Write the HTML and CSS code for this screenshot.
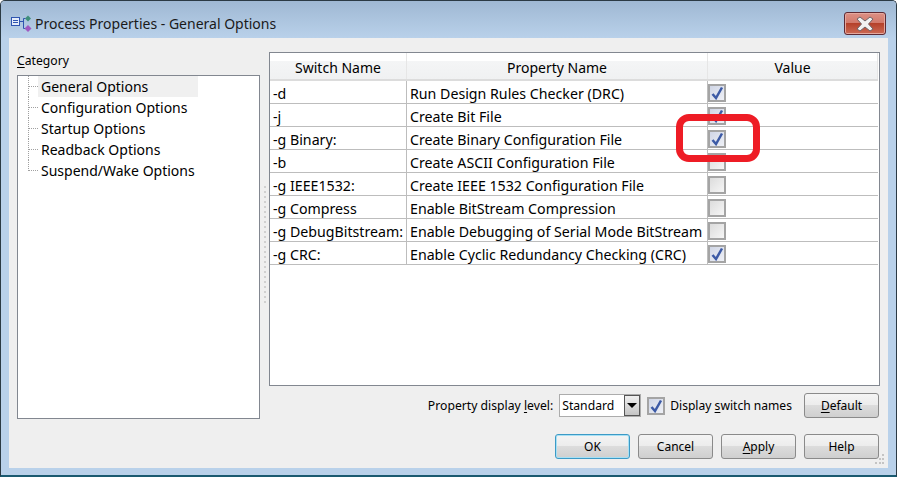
FILE: index.html
```html
<!DOCTYPE html>
<html lang="en">
<head>
<meta charset="utf-8">
<title>Process Properties - General Options</title>
<link rel="stylesheet" href="styles.css">
</head>
<body>
<div class="window">
  <header class="titlebar">
    <svg class="app-icon" width="21" height="17" viewBox="0 0 21 17">
      <rect x="0.5" y="2.5" width="8" height="8" fill="#e4ecfa" stroke="#2f55b0"/>
      <path d="M2 5.5h5M2 7.5h5" stroke="#2f55b0"/>
      <path d="M9 6.5h3.5M12.5 3.5v10M12.5 3.5h2M12.5 13.5h2" stroke="#2f55b0" fill="none"/>
      <path d="M17 0.5l3 3l-3 3l-3-3z" fill="#3f8f7a"/>
      <path d="M17 10l3.500 3.500l-3.500 3.500l-3.500-3.500z" fill="#a05ac0"/>
    </svg>
    <h1 class="title">Process Properties - General Options</h1>
    <button class="close" aria-label="Close">
      <svg width="18" height="16" viewBox="0 0 18 16">
        <path d="M1 3L4 1L9 5L14 1L17 3L12.500 8L17 13L14 15L9 11L4 15L1 13L5.500 8Z" fill="#f2f2f2" stroke="#6e6468"/>
      </svg>
    </button>
  </header>
  <main class="content">
    <div class="panes">
      <section class="left">
        <label class="cat-label"><u>C</u>ategory</label>
        <ul class="tree">
          <li class="node selected"><span>General Options</span></li>
          <li class="node"><span>Configuration Options</span></li>
          <li class="node"><span>Startup Options</span></li>
          <li class="node"><span>Readback Options</span></li>
          <li class="node last"><span>Suspend/Wake Options</span></li>
        </ul>
      </section>
      <div class="splitter"><div class="grip"></div></div>
      <section class="right">
        <div class="gridbox">
          <div class="row head">
            <div class="c1">Switch Name</div>
            <div class="c2">Property Name</div>
            <div class="c3">Value</div>
          </div>
          <div class="row"><div class="c1">-d</div><div class="c2">Run Design Rules Checker (DRC)</div><div class="c3"><span class="cb on"><svg width="14" height="14" viewBox="0 0 14 14"><path d="M2.500 8L6 12L12 1.500" class="tick"/></svg></span></div></div>
          <div class="row"><div class="c1">-j</div><div class="c2">Create Bit File</div><div class="c3"><span class="cb on"><svg width="14" height="14" viewBox="0 0 14 14"><path d="M2.500 8L6 12L12 1.500" class="tick"/></svg></span></div></div>
          <div class="row"><div class="c1">-g Binary:</div><div class="c2">Create Binary Configuration File</div><div class="c3"><span class="cb on"><svg width="14" height="14" viewBox="0 0 14 14"><path d="M2.500 8L6 12L12 1.500" class="tick"/></svg></span></div></div>
          <div class="row"><div class="c1">-b</div><div class="c2">Create ASCII Configuration File</div><div class="c3"><span class="cb"></span></div></div>
          <div class="row"><div class="c1">-g IEEE1532:</div><div class="c2">Create IEEE 1532 Configuration File</div><div class="c3"><span class="cb"></span></div></div>
          <div class="row"><div class="c1">-g Compress</div><div class="c2">Enable BitStream Compression</div><div class="c3"><span class="cb"></span></div></div>
          <div class="row"><div class="c1">-g DebugBitstream:</div><div class="c2">Enable Debugging of Serial Mode BitStream</div><div class="c3"><span class="cb"></span></div></div>
          <div class="row"><div class="c1">-g CRC:</div><div class="c2">Enable Cyclic Redundancy Checking (CRC)</div><div class="c3"><span class="cb on"><svg width="14" height="14" viewBox="0 0 14 14"><path d="M2.500 8L6 12L12 1.500" class="tick"/></svg></span></div></div>
        </div>
        <div class="controls">
          <span class="lvl-label">Property display <u>l</u>evel:</span>
          <div class="combo"><span class="combo-text">Standard</span><span class="combo-btn"><i class="arrow"></i></span></div>
          <span class="cb on small"><svg width="14" height="14" viewBox="0 0 14 14"><path d="M2.500 8L6 12L12 1.500" class="tick"/></svg></span>
          <span class="sw-label">Display <u>s</u>witch names</span>
          <button class="btn"><u>D</u>efault</button>
        </div>
      </section>
    </div>
    <footer class="actions">
      <button class="btn primary">OK</button>
      <button class="btn">Cancel</button>
      <button class="btn"><u>A</u>pply</button>
      <button class="btn">Help</button>
    </footer>
    <svg class="resize" width="12" height="12" viewBox="0 0 12 12">
      <path d="M8 0h2v2H8zM5 4h2v2H5zM8 4h2v2H8zM1 8h2v2H1zM5 8h2v2H5zM8 8h2v2H8z" fill="#c4c4c4"/>
    </svg>
  </main>
  <div class="annotation"></div>
</div>
</body>
</html>
```
FILE: styles.css
```css
* { box-sizing: border-box; }
html, body { margin: 0; height: 100%; background: #fff; }
body { overflow: hidden; font-family: "Noto Sans", "Open Sans", sans-serif; font-size: 14px; color: #000; }
u { text-decoration: underline; text-underline-offset: 2px; }

.window {
  position: relative;
  width: 897px;
  height: 477px;
  display: flex;
  flex-direction: column;
  border: 1px solid #2b3a44;
  border-bottom: 2px solid #1a5a70;
  border-radius: 5px 5px 0 0;
  background: #b9d1ea;
  padding: 0 8px 7px 0;
}
.titlebar {
  height: 37px;
  margin: 0 -8px 0 0;
  padding: 8px 10px 0 10px;
  display: flex;
  align-items: center;
  background: linear-gradient(#9fb8d3, #b9d1ea);
  border-radius: 4px 4px 0 0;
}
.app-icon { margin-right: 3px; flex: none; }
.title { margin: 0; font: 400 14px "Noto Sans", sans-serif; color: #1a1a1a; flex: 1; }
.close {
  width: 42px;
  height: 23px;
  padding: 0;
  display: flex;
  align-items: center;
  justify-content: center;
  border: 1px solid #5e2a34;
  border-radius: 3px;
  box-shadow: inset 0 0 0 1px #e4a89e;
  background: linear-gradient(#dc9085 0%, #d27a6c 46%, #b5412a 50%, #cc6a55 100%);
}

.content {
  position: relative;
  flex: 1;
  margin-left: 8px;
  background: #efefef;
  padding: 14px 8px 9px 8px;
  display: flex;
  flex-direction: column;
}
.panes { display: flex; flex: 1; }
.left { width: 243px; display: flex; flex-direction: column; }
.cat-label { height: 23px; line-height: 17px; font-size: 12.2px; }
.tree {
  margin: 0;
  padding: 0;
  list-style: none;
  height: 344px;
  background: #fff;
  border: 1px solid #828790;
}
.node {
  position: relative;
  height: 21px;
  padding-left: 20px;
  line-height: 21px;
}
.node span { display: block; width: 160px; padding-left: 3px; }
.node.selected span { background: #f0f0f0; }
.node::before {
  content: "";
  position: absolute;
  left: 10px;
  top: 0;
  bottom: 0;
  border-left: 1px dotted #a0a0a0;
}
.node.last::before { bottom: 10px; }
.node::after {
  content: "";
  position: absolute;
  left: 10px;
  top: 10px;
  width: 10px;
  border-top: 1px dotted #a0a0a0;
}
.splitter { width: 9px; display: flex; align-items: center; justify-content: center; }
.grip {
  width: 2px;
  height: 120px;
  margin-top: 5px;
  background: repeating-linear-gradient(#d0d0d0 0 2px, transparent 2px 5px);
}
.right { width: 611px; display: flex; flex-direction: column; }
.gridbox {
  height: 334px;
  background: #fff;
  border: 1px solid #828790;
  padding-right: 1px;
}
.row {
  height: 23px;
  display: grid;
  grid-template-columns: 137px 301px 170px;
  border-bottom: 1px solid #bdbdbd;
  font-size: 14.2px;
}
.row > div { border-right: 1px solid #bdbdbd; padding: 2px 0 0 3px; line-height: 21px; white-space: nowrap; overflow: hidden; }
.row > .c3 { border-right: 0; padding: 0; }
.row.head {
  height: 28px;
  background: linear-gradient(#fff 0 8px, #f4f5f6 8px, #f0f1f2);
  border-bottom: 2px solid #dcdcdc;
  text-align: center;
  font-size: 14px;
}
.row.head > div { border-right: 1px solid #e6e6e6; padding: 0; line-height: 29px; }
.cb {
  display: flex;
  align-items: center;
  justify-content: center;
  width: 18px;
  height: 18px;
  margin-top: 3px;
  border: 2px solid #a4a4a4;
  background: linear-gradient(135deg, #dcdcdc, #f6f6f6);
}
.cb.on { background: linear-gradient(135deg, #d0d6e6, #eef0f6); }
.tick { fill: none; stroke: #3c5aa6; stroke-width: 2.5; }

.controls {
  display: flex;
  align-items: center;
  height: 25px;
  margin-top: 7px;
  padding-right: 1px;
  justify-content: flex-end;
}
.lvl-label { margin-right: 6px; font-size: 12.2px; }
.combo {
  width: 82px;
  height: 23px;
  display: flex;
  background: #fff;
  border: 1px solid #acacac;
}
.combo-text { flex: 1; padding-left: 2px; line-height: 21px; font-size: 12.2px; }
.combo-btn {
  width: 16px;
  display: flex;
  align-items: center;
  justify-content: center;
  background: linear-gradient(#f0f0f0, #c4c4c4);
  border: 1px solid #555;
}
.arrow { width: 0; height: 0; border: 5px solid transparent; border-top: 5px solid #000; border-bottom: 0; }
.cb.small { margin: 0 5px 0 6px; }
.sw-label { margin-right: 12px; font-size: 12.1px; }
.btn {
  width: 75px;
  height: 25px;
  padding: 0;
  font: 12px "Noto Sans", sans-serif;
  color: #000;
  border: 1px solid #8a8a8a;
  border-radius: 3px;
  background: linear-gradient(#f4f4f4 0%, #ececec 48%, #dcdcdc 50%, #cfcfcf 100%);
}
.btn.primary { border-color: #3c9ac6; box-shadow: inset 0 0 0 1px #a8e0f4; }
.actions {
  display: flex;
  justify-content: flex-end;
  gap: 8px;
  padding-right: 1px;
}
.resize { position: absolute; right: 2px; bottom: 2px; }
.annotation {
  position: absolute;
  left: 675px;
  top: 113px;
  width: 84px;
  height: 48px;
  border: 7px solid #ee1c25;
  border-radius: 13px;
}
```
